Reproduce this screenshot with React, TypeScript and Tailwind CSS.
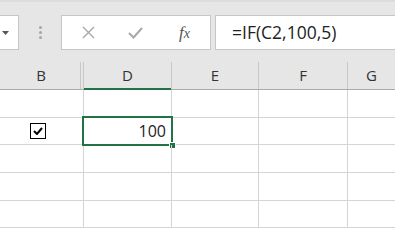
import React from 'react';

const cols = [
  { key: 'D', w: 'w-[88px]' },
  { key: 'E', w: 'w-[87px]' },
  { key: 'F', w: 'w-[89px]' },
];

const rowHeights = ['h-[28px]', 'h-[27px]', 'h-[28px]', 'h-[28px]', 'h-[27px]'];

export default function App() {
  return (
    <div className="w-[395px] h-[229px] overflow-hidden bg-white font-['Open_Sans',sans-serif] text-[#333]">
      {/* Formula bar */}
      <div className="h-[62px] bg-[#e6e6e6] border-t-2 border-[#dcdcdc] flex items-start pt-[13px]">
        <div className="w-[19px] h-[35px] bg-white border border-l-0 border-[#c6c6c6] flex items-center pl-[2px]">
          <svg width="7" height="4" viewBox="0 0 7 4">
            <path d="M0 0h7L3.5 4z" fill="#555" />
          </svg>
        </div>
        <div className="w-[42px] h-[35px] flex flex-col items-center justify-center gap-[2px]">
          <span className="w-[3px] h-[3px] rounded-full bg-[#a6a6a6]" />
          <span className="w-[3px] h-[3px] rounded-full bg-[#a6a6a6]" />
          <span className="w-[3px] h-[3px] rounded-full bg-[#a6a6a6]" />
        </div>
        <div className="w-[150px] h-[35px] bg-white border border-[#c6c6c6] flex items-center">
          <div className="w-[33px] flex justify-end">
            <svg width="13" height="13" viewBox="0 0 13 13">
              <path d="M1 1l11 11M12 1L1 12" stroke="#a8a8a8" strokeWidth="1.4" />
            </svg>
          </div>
          <div className="w-[48px] flex justify-end">
            <svg width="15" height="12" viewBox="0 0 15 12">
              <path d="M1 6l4.5 4.5L14 1" stroke="#a8a8a8" strokeWidth="2" fill="none" />
            </svg>
          </div>
          <div className="w-[47px] flex justify-end">
            <span className="font-['Liberation_Serif',serif] italic text-[17px] leading-none text-[#555]">
              f<span className="text-[14px]">x</span>
            </span>
          </div>
        </div>
        <div className="ml-[4px] flex-1 h-[35px] bg-white border border-r-0 border-[#c6c6c6] flex items-center pl-[16px]">
          <span className="text-[17.5px] leading-none text-[#222]">=IF(C2,100,5)</span>
        </div>
      </div>

      {/* Column headers */}
      <div className="h-[28px] bg-[#e6e6e6] border-b border-[#ababab] flex text-[15px] text-[#333]">
        <div className="w-[81px] border-r border-[#c8c8c8] flex items-center justify-center pl-[2px]">B</div>
        <div className="w-[3px] border-r border-[#c8c8c8]" />
        <div className="w-[88px] border-r border-[#c8c8c8] flex items-center justify-center relative">
          D
          <div className="absolute left-0 right-0 -bottom-[1px] h-[2px] bg-[#217346]" />
        </div>
        {cols.slice(1).map((c) => (
          <div key={c.key} className={`${c.w} border-r border-[#c8c8c8] flex items-center justify-center`}>
            {c.key}
          </div>
        ))}
        <div className="flex-1 flex items-center justify-center">G</div>
      </div>

      {/* Rows */}
      {rowHeights.map((h, i) => (
        <div key={i} className={`${h} flex border-b border-[#d4d4d4]`}>
          <div className="w-[84px] border-r border-[#d4d4d4] flex items-center pl-[30px]">
            {i === 1 && (
              <div className="w-[16px] h-[16px] border-[1.5px] border-black flex items-center justify-center">
                <svg width="10" height="8" viewBox="0 0 10 8">
                  <path d="M1 4l3 3 5-6" stroke="#000" strokeWidth="2" fill="none" />
                </svg>
              </div>
            )}
          </div>
          <div className="w-[88px] border-r border-[#d4d4d4] relative">
            {i === 1 && (
              <>
                <div className="absolute -left-[2px] -top-[2px] -right-[2px] -bottom-[2px] border-2 border-[#217346] flex items-center justify-end pr-[5px] text-[16px] text-[#222]">
                  100
                </div>
                <div className="absolute -right-[5px] -bottom-[5px] w-[7px] h-[7px] bg-[#217346] border border-white" />
              </>
            )}
          </div>
          <div className="w-[87px] border-r border-[#d4d4d4]" />
          <div className="w-[89px] border-r border-[#d4d4d4]" />
          <div className="flex-1" />
        </div>
      ))}
    </div>
  );
}
